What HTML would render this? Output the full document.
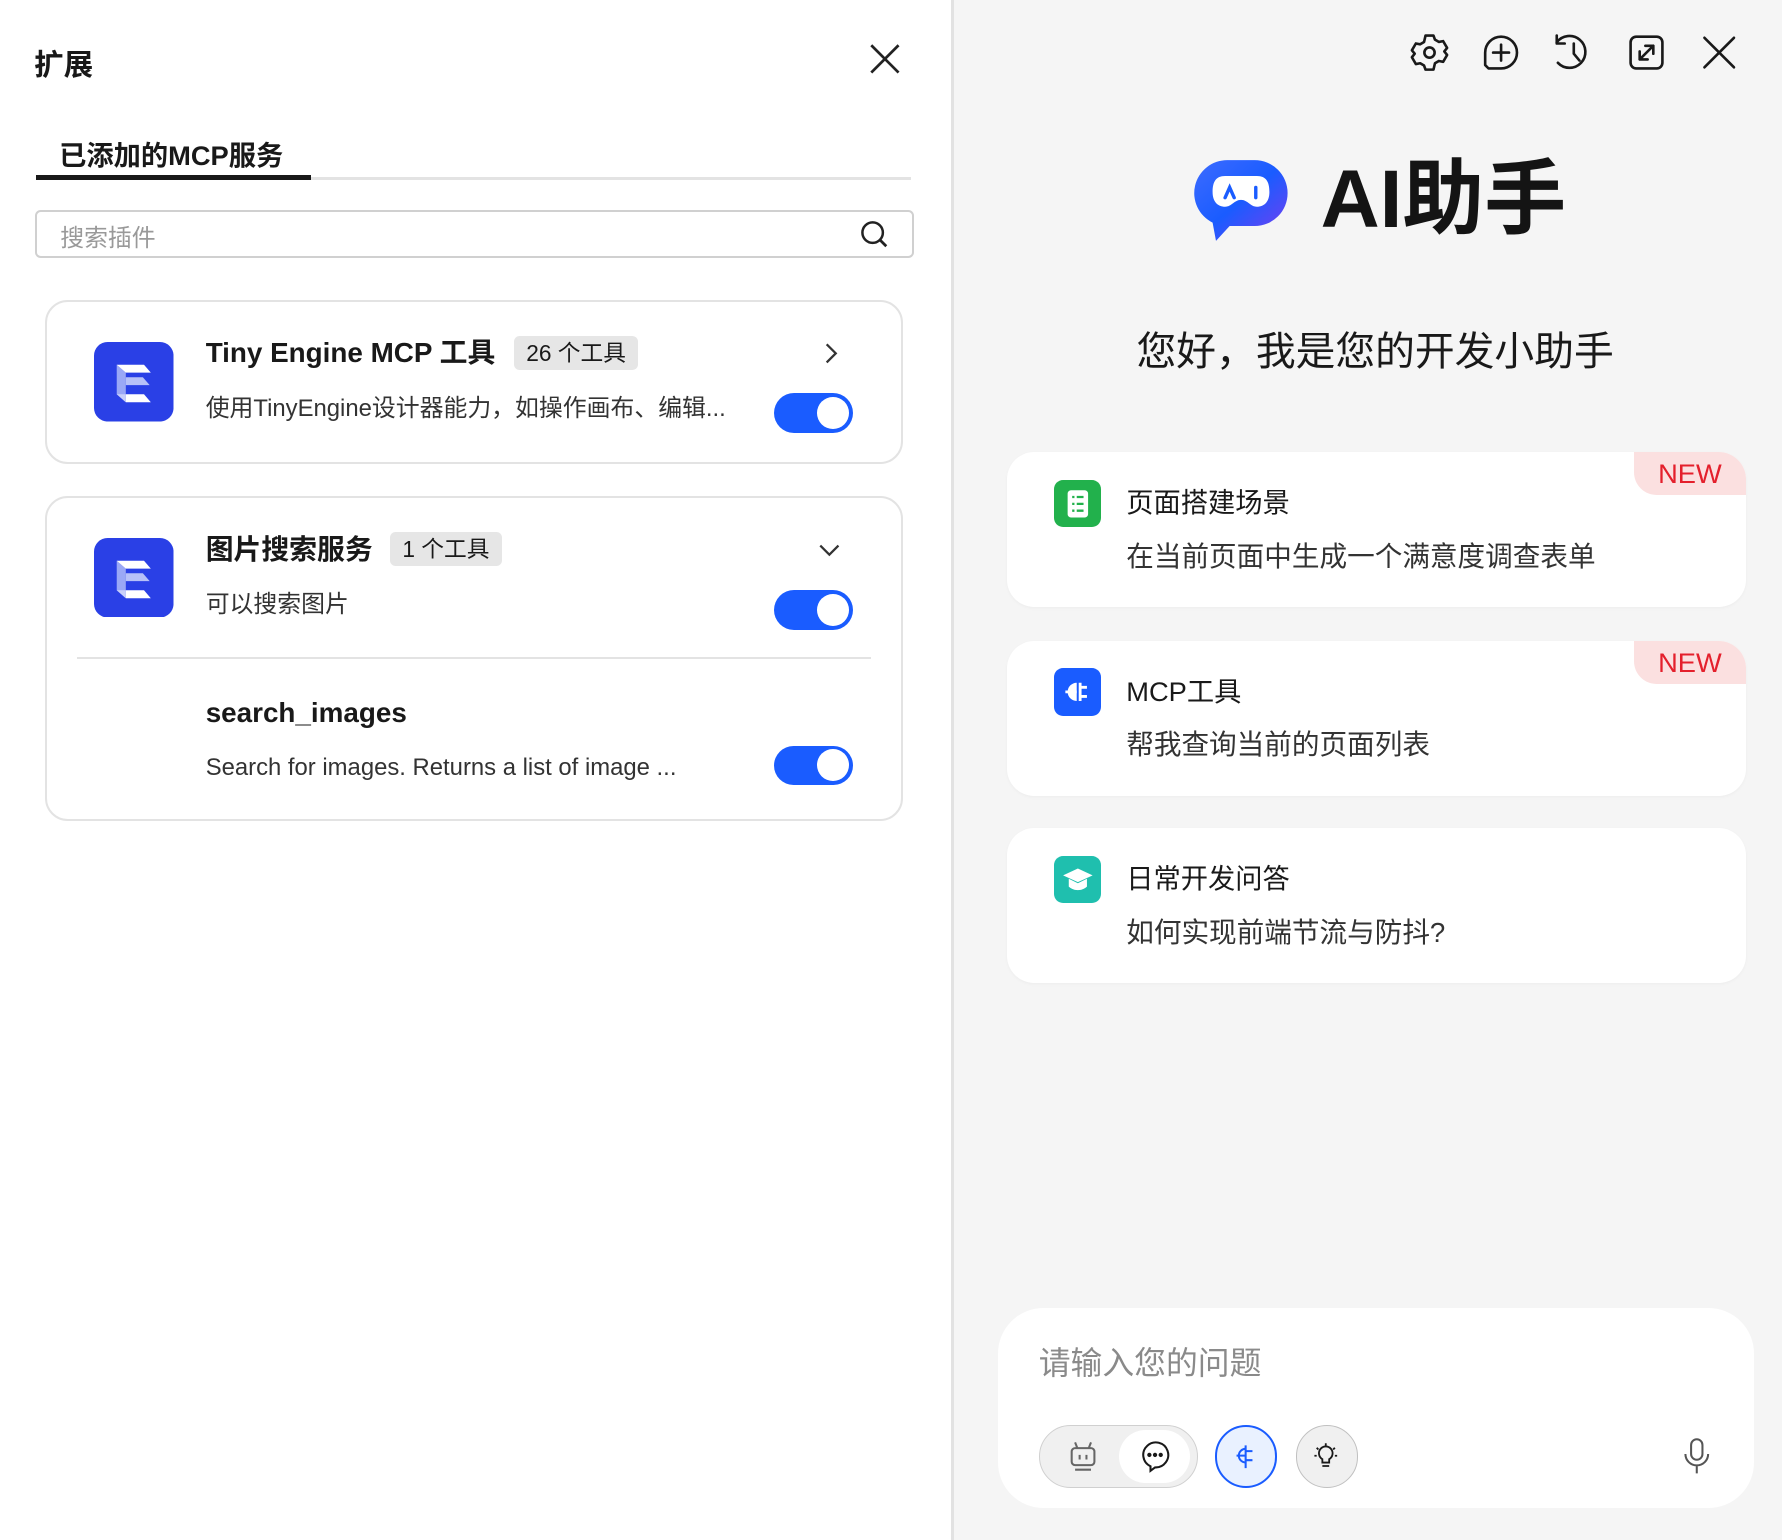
<!DOCTYPE html>
<html><head><meta charset="utf-8"><style>
*{box-sizing:border-box;margin:0;padding:0}
html,body{width:1782px;height:1540px;overflow:hidden;background:#f5f5f5}
#w{zoom:1.13648;width:1568px;height:1355px;position:relative;font-family:"Liberation Sans","Noto Sans CJK SC",sans-serif;color:#191919}
.a{position:absolute}
.left{left:0;top:0;width:839px;height:1355px;background:#fff;border-right:3px solid #e2e2e2}
.card{position:absolute;left:40px;width:755px;border:2px solid #e3e3e3;border-radius:20px;background:#fff}
.tt{position:absolute;font-size:24.5px;font-weight:bold;line-height:30px;white-space:nowrap}
.bd{position:absolute;height:30px;background:#e6e6e6;border-radius:5px;font-size:20px;line-height:30px;padding:0 11px;font-weight:normal}
.ds{position:absolute;font-size:21px;color:#333;line-height:28px;white-space:nowrap}
.tg{position:absolute;width:70px;height:35px;border-radius:18px;background:#1a5cff}
.tg:after{content:"";position:absolute;right:4px;top:3.5px;width:28px;height:28px;border-radius:50%;background:#fff}
.rc{position:absolute;left:886px;width:650px;height:136px;background:#fff;border-radius:24px;overflow:hidden;box-shadow:0 1px 3px rgba(0,0,0,.03)}
.rc .i{position:absolute;left:41px;top:24px;width:42px;height:42px;border-radius:8px}
.rc .t{position:absolute;left:105px;top:29px;font-size:24px;line-height:32px}
.rc .s{position:absolute;left:105px;top:76px;font-size:24.3px;line-height:32px;color:#333}
.new{position:absolute;right:0;top:0;width:98px;height:38px;background:#fbe0e0;color:#e4202c;font-size:24px;line-height:38px;text-align:center;border-bottom-left-radius:20px}
</style></head><body><div id="w">
<div class="a left"></div>
<div class="a" style="left:30px;top:36px;font-size:26px;font-weight:bold">扩展</div>
<svg class="a" style="left:765px;top:38px" width="28" height="28" viewBox="0 0 28 28"><path d="M2 2L26 26M26 2L2 26" stroke="#222" stroke-width="2.4"/></svg>
<div class="a" style="left:52px;top:117px;font-size:24px;font-weight:bold">已添加的MCP服务</div>
<div class="a" style="left:32px;top:156px;width:770px;height:2px;background:#e3e3e3"></div>
<div class="a" style="left:32px;top:154px;width:242px;height:4px;background:#191919"></div>
<div class="a" style="left:31px;top:185px;width:773px;height:42px;border:2px solid #d0d0d0;border-radius:5px"></div>
<div class="a" style="left:53px;top:192px;font-size:21px;color:#999">搜索插件</div>
<svg class="a" style="left:756px;top:193px" width="26" height="26" viewBox="0 0 26 26"><circle cx="12" cy="12" r="9" fill="none" stroke="#222" stroke-width="2.2"/><path d="M18.5 18.5L24 24" stroke="#222" stroke-width="2.4"/></svg>

<div class="card" style="top:264px;height:144px"></div>
<div class="card" style="top:436px;height:286px"></div>
<svg style="display:none"><symbol id="E" viewBox="0 0 70 70"><rect width="70" height="70" rx="12" fill="#2a40e6"/><path d="M20 20L28 27V53L20 46Z" fill="#9aa8f6"/><path d="M20 20H44L50 27H28Z" fill="#fff"/><path d="M28 31H43L49 38H28Z" fill="#b7c1f8"/><path d="M28 46H44L50 53H28Z" fill="#fff"/><path d="M20 46H28V53Z" fill="#c9d0fa"/></symbol></svg>
<svg class="a" style="left:83px;top:301px" width="70" height="70"><use href="#E"/></svg>
<svg class="a" style="left:83px;top:473px" width="70" height="70"><use href="#E"/></svg>
<div class="tt" style="left:181px;top:296px">Tiny Engine MCP 工具</div>
<div class="bd" style="left:452px;top:296px">26 个工具</div>
<svg class="a" style="left:722px;top:301px" width="18" height="20" viewBox="0 0 18 20"><path d="M5 2L13 10L5 18" fill="none" stroke="#333" stroke-width="2"/></svg>
<div class="ds" style="left:181px;top:346px">使用TinyEngine设计器能力，如操作画布、编辑...</div>
<div class="tg" style="left:681px;top:346px"></div>
<div class="tt" style="left:181px;top:469px">图片搜索服务</div>
<div class="bd" style="left:343px;top:468px">1 个工具</div>
<svg class="a" style="left:720px;top:476px" width="20" height="16" viewBox="0 0 20 16"><path d="M2 4L10 12L18 4" fill="none" stroke="#333" stroke-width="2"/></svg>
<div class="ds" style="left:181px;top:518px">可以搜索图片</div>
<div class="tg" style="left:681px;top:519px"></div>
<div class="a" style="left:68px;top:578px;width:698px;height:2px;background:#e3e3e3"></div>
<div class="tt" style="left:181px;top:612px">search_images</div>
<div class="ds" style="left:181px;top:662px">Search for images. Returns a list of image ...</div>
<div class="tg" style="left:681px;top:656px"></div>

<svg class="a" style="left:1240px;top:27px" width="290" height="38" viewBox="0 0 290 38" fill="none" stroke="#191919" stroke-width="2.3" stroke-linecap="round" stroke-linejoin="round">
<path d="M14.5 4h7l1.3 3.6 3.4 2 3.8-.7 3.5 6-2.5 3.1 2.5 3.1-3.5 6-3.8-.7-3.4 2L21.5 34h-7l-1.3-3.6-3.4-2-3.8.7-3.5-6L5 20 2.5 17 6 11l3.8.7 3.4-2Z"/>
<circle cx="18" cy="19" r="4.5"/>
<path d="M70 33 H81 A14 14 0 1 0 67 19 V30 Z"/><path d="M81 12v14M74 19h14"/>
<path d="M130 10 A14 14 0 1 1 131 28"/><path d="M130 4v7h7"/><path d="M145 11v9l5 6"/>
<rect x="195" y="5" width="28" height="28" rx="5"/><path d="M203 25l12-12M208 13h7v7M210 25h-7v-7"/>
<path d="M260 6l26 26M286 6l-26 26"/>
</svg>
<svg class="a" style="left:1048px;top:140px" width="88" height="74" viewBox="0 0 88 74"><defs><linearGradient id="g" x1="0" y1="0" x2="1" y2="1"><stop offset="0" stop-color="#3d6bff"/><stop offset=".5" stop-color="#1a5cff"/><stop offset="1" stop-color="#7a3cf0"/></linearGradient></defs>
<path d="M32 1H56A29 29 0 0 1 56 59H34L22 72L19 56A29 29 0 0 1 32 1Z" fill="url(#g)"/>
<path d="M30 15H58C66 15 69 20 69 29C69 38 64 42 58 42C52 42 50 36 44 36C38 36 36 42 30 42C24 42 19 38 19 29C19 20 22 15 30 15Z" fill="#fff"/>
<path d="M30 34L34 25L38 34" fill="none" stroke="#1a5cff" stroke-width="3" stroke-linecap="round"/><path d="M57 25V34" stroke="#1a5cff" stroke-width="3" stroke-linecap="round"/></svg>
<div class="a" style="left:1162px;top:133px;font-size:72px;font-weight:bold;line-height:86px;color:#141414">AI助手</div>
<div class="a" style="left:860px;width:700px;text-align:center;top:288px;font-size:35px;line-height:44px;color:#191919">您好，我是您的开发小助手</div>

<div class="rc" style="top:398px"><div class="i" style="background:#22b14c"><svg width="42" height="42" viewBox="0 0 42 42"><rect x="12" y="9" width="18" height="24" rx="3" fill="#fff"/><path d="M16 15h2M20 15h6M16 21h2M20 21h6M16 27h2M20 27h6" stroke="#22b14c" stroke-width="2"/></svg></div><div class="t">页面搭建场景</div><div class="s">在当前页面中生成一个满意度调查表单</div><div class="new">NEW</div></div>
<div class="rc" style="top:564px"><div class="i" style="background:#1a5cff"><svg width="42" height="42" viewBox="0 0 42 42"><path d="M20 13a8 8 0 0 0 0 16Z" fill="#fff"/><path d="M10 21h10M23 13v16M23 17h6M23 25h6" stroke="#fff" stroke-width="2.5"/></svg></div><div class="t">MCP工具</div><div class="s">帮我查询当前的页面列表</div><div class="new">NEW</div></div>
<div class="rc" style="top:729px"><div class="i" style="background:#1fbfae"><svg width="42" height="42" viewBox="0 0 42 42"><path d="M8 17L21 11L34 17L21 23Z" fill="#fff"/><path d="M13 20v7c4 4 12 4 16 0v-7l-8 4Z" fill="#fff"/></svg></div><div class="t">日常开发问答</div><div class="s">如何实现前端节流与防抖?</div></div>

<div class="a" style="left:878px;top:1151px;width:665px;height:176px;background:#fff;border-radius:40px"></div>
<div class="a" style="left:914px;top:1182px;font-size:28px;color:#8a8a8a;line-height:36px">请输入您的问题</div>
<div class="a" style="left:914px;top:1254px;width:140px;height:55px;border-radius:28px;background:#f0f0f0;border:1.5px solid #d0d0d0"></div>
<div class="a" style="left:985px;top:1258px;width:62px;height:47px;border-radius:24px;background:#fff"></div>
<svg class="a" style="left:938px;top:1266px" width="30" height="30" viewBox="0 0 30 30" fill="none" stroke="#666" stroke-width="1.8"><rect x="5" y="8" width="20" height="15" rx="3"/><path d="M10 8L8 3M20 8l2-5M12 14v4M18 14v4M8 27h14"/></svg>
<svg class="a" style="left:1001px;top:1266px" width="30" height="30" viewBox="0 0 30 30" fill="none" stroke="#191919" stroke-width="1.8"><path d="M11 28V24A11 11 0 1 1 15 25Z"/><circle cx="10" cy="14" r="1" fill="#191919"/><circle cx="15" cy="14" r="1" fill="#191919"/><circle cx="20" cy="14" r="1" fill="#191919"/></svg>
<div class="a" style="left:1069px;top:1254px;width:55px;height:55px;border-radius:50%;background:#e9f1ff;border:2px solid #1a5cff"></div>
<svg class="a" style="left:1084px;top:1269px" width="26" height="26" viewBox="0 0 26 26" fill="none" stroke="#1a5cff" stroke-width="1.8"><path d="M12 6a6 6 0 0 0 0 12"/><path d="M4 12h8M12 3v20M12 8h6M12 16h6"/></svg>
<div class="a" style="left:1140px;top:1254px;width:55px;height:55px;border-radius:50%;background:#f0f0f0;border:1.5px solid #c0c0c0"></div>
<svg class="a" style="left:1154px;top:1268px" width="26" height="26" viewBox="0 0 26 26" fill="none" stroke="#191919" stroke-width="1.6"><path d="M10 19v-3a6 6 0 1 1 6 0v3Z"/><path d="M10 22h6M13 2v2M5 6l1.5 1.5M21 6l-1.5 1.5M3 13h2M21 13h2"/></svg>
<svg class="a" style="left:1480px;top:1264px" width="26" height="34" viewBox="0 0 26 34" fill="none" stroke="#555" stroke-width="1.8"><rect x="8" y="2" width="10" height="18" rx="5"/><path d="M3 15a10 10 0 0 0 20 0M13 25v7"/></svg>
</div></body></html>
